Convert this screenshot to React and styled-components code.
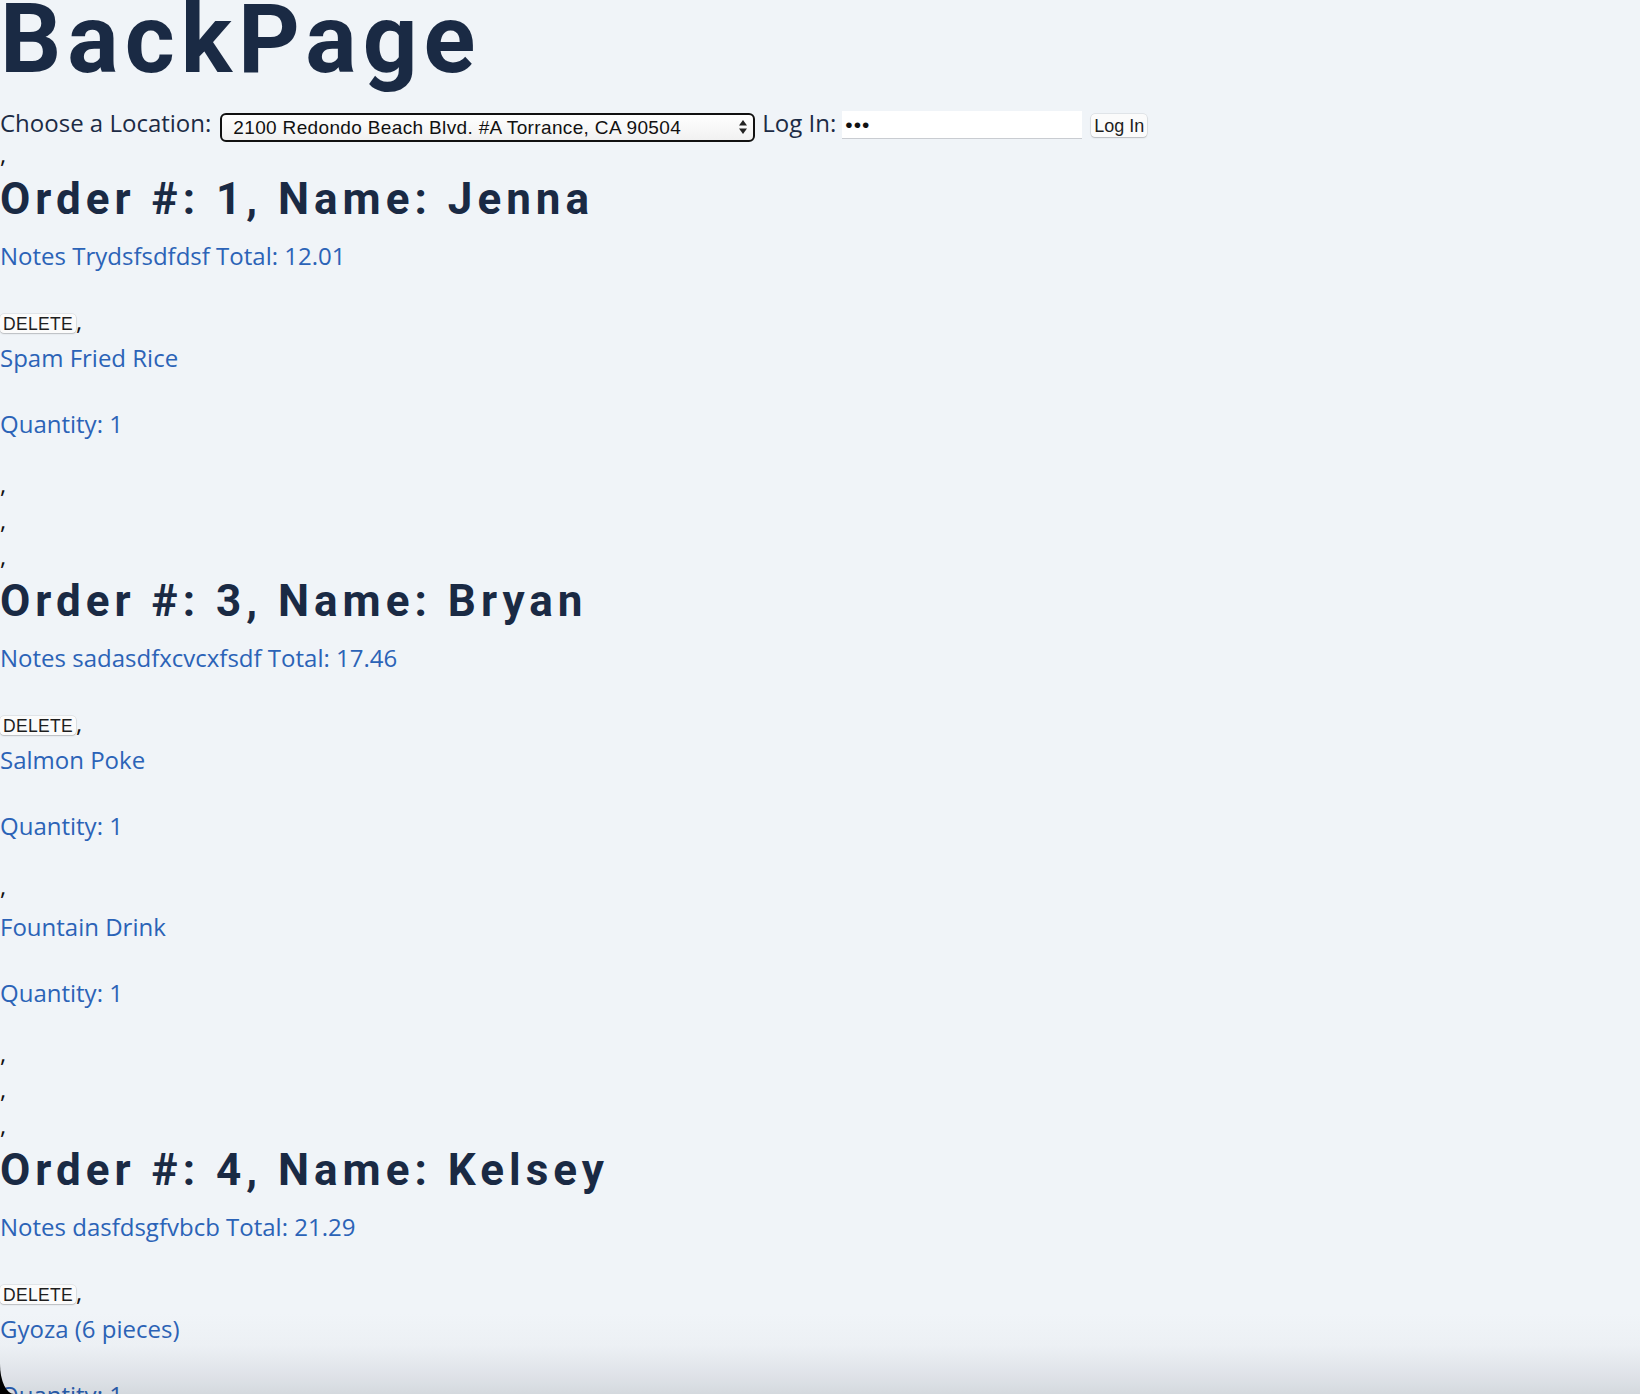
import React from "react";
import styled, { createGlobalStyle } from "styled-components";

const Global = createGlobalStyle`
  html, body { margin: 0; padding: 0; background: #f0f4f8; }
  body { font-family: "Open Sans", "Noto Sans", sans-serif; font-size: 24px; color: #1c2b45; overflow: hidden; }
`;

const Page = styled.div`
  min-height: 1394px;
`;

const Title = styled.h1`
  margin: 0;
  font-family: Roboto, "Liberation Sans", sans-serif;
  font-weight: 700;
  font-size: 96px;
  line-height: 78px;
  letter-spacing: 6px;
  color: #1a2a44;
`;

const Toolbar = styled.div`
  display: flex;
  align-items: flex-start;
  height: 28px;
  margin-top: 30px;
`;

const Label = styled.span`
  font-size: 24px;
  line-height: 32px;
  margin-top: -1px;
  color: #1c2b45;
  margin-left: ${(p) => p.$ml || 0}px;
  white-space: nowrap;
`;

const SelectWrap = styled.div`
  position: relative;
  margin-left: 9px;
  margin-top: 5px;
  height: 28px;
`;

const Select = styled.select`
  display: block;
  appearance: none;
  -webkit-appearance: none;
  width: 535px;
  height: 29px;
  box-sizing: border-box;
  border: 2px solid #111;
  border-radius: 6px;
  background: linear-gradient(#ffffff, #f1f1f1);
  font-family: "Liberation Sans", Arial, sans-serif;
  font-size: 19px;
  letter-spacing: 0.35px;
  color: #111;
  padding: 0 0 0 11px;
  margin: 0;
  outline: none;
`;

const Arrows = styled.svg`
  position: absolute;
  right: 7px;
  top: 5px;
  pointer-events: none;
`;

const Password = styled.input`
  display: block;
  width: 240px;
  height: 28px;
  box-sizing: border-box;
  margin: 3px 0 0 6px;
  border: none;
  border-bottom: 1px solid #c9ccd1;
  background: #ffffff;
  font-family: "Liberation Sans", Arial, sans-serif;
  font-size: 21px;
  padding: 0 3px;
  color: #111;
  outline: none;
  letter-spacing: 1px;
`;

const SmallButton = styled.button`
  font-family: "Liberation Sans", Arial, sans-serif;
  font-size: ${(p) => p.$size || 17.5}px;
  letter-spacing: 0.3px;
  color: #1e1e1e;
  background: #fbfbfb;
  border: none;
  border-radius: 4px;
  box-shadow: 0 0 0 0.5px rgba(0, 0, 0, 0.12), 0 1px 1.5px rgba(0, 0, 0, 0.18);
  padding: 1px 3px 0;
  line-height: 18px;
  margin: 0;
  cursor: pointer;
`;

const LoginButton = styled(SmallButton)`
  display: block;
  margin-left: 9px;
  margin-top: 6px;
  height: 23px;
  padding: 0 3px;
  letter-spacing: 0;
`;

const Sep = styled.div`
  font-size: 24px;
  line-height: 36px;
  height: 36px;
  color: #111;
  margin-top: ${(p) => p.$mt || 0}px;
`;

const Heading = styled.h2`
  margin: 2px 0 0;
  font-family: Roboto, "Liberation Sans", sans-serif;
  font-weight: 700;
  font-size: 44px;
  line-height: 50px;
  letter-spacing: 5px;
  color: #1a2a44;
`;

const Text = styled.p`
  margin: ${(p) => p.$mt || 0}px 0 0;
  font-size: 24px;
  line-height: 32px;
  color: #2b63b7;
`;

const DeleteLine = styled.div`
  margin-top: 33px;
  font-size: 24px;
  line-height: 32px;
  height: 32px;
  color: #111;
`;

const Shade = styled.div`
  position: fixed;
  left: 0;
  right: 0;
  bottom: 0;
  height: 80px;
  pointer-events: none;
  mix-blend-mode: multiply;
  background: linear-gradient(#ffffff, #fbfbfb 40%, #eeeef0 75%, #e2e3e5);
`;

const Corner = styled.div`
  position: fixed;
  left: 0;
  bottom: 0;
  width: 14px;
  height: 30px;
  overflow: hidden;
  pointer-events: none;
  &::before {
    content: "";
    position: absolute;
    left: 0;
    bottom: 0;
    width: 40px;
    height: 60px;
    border-bottom-left-radius: 14px 30px;
    box-shadow: 0 0 0 30px #000;
  }
`;

const orders = [
  {
    id: 1,
    name: "Jenna",
    notes: "Trydsfsdfdsf",
    total: "12.01",
    items: [{ name: "Spam Fried Rice", qty: 1 }],
  },
  {
    id: 3,
    name: "Bryan",
    notes: "sadasdfxcvcxfsdf",
    total: "17.46",
    items: [
      { name: "Salmon Poke", qty: 1 },
      { name: "Fountain Drink", qty: 1 },
    ],
  },
  {
    id: 4,
    name: "Kelsey",
    notes: "dasfdsgfvbcb",
    total: "21.29",
    items: [{ name: "Gyoza (6 pieces)", qty: 1 }],
  },
];

function Order({ order }) {
  return (
    <>
      <Sep>,</Sep>
      <Heading>
        Order #: {order.id}, Name: {order.name}
      </Heading>
      <Text $mt={16}>
        Notes {order.notes} Total: {order.total}
      </Text>
      <DeleteLine>
        <SmallButton>DELETE</SmallButton>,
      </DeleteLine>
      {order.items.map((it, i) => (
        <React.Fragment key={i}>
          <Text $mt={i === 0 ? 5 : 7}>{it.name}</Text>
          <Text $mt={34}>Quantity: {it.qty}</Text>
          <Sep $mt={26}>,</Sep>
        </React.Fragment>
      ))}
    </>
  );
}

export default function App() {
  return (
    <Page>
      <Global />
      <Title>BackPage</Title>
      <Toolbar>
        <Label>Choose a Location:</Label>
        <SelectWrap>
          <Select defaultValue="a">
            <option value="a">2100 Redondo Beach Blvd. #A Torrance, CA 90504</option>
          </Select>
          <Arrows width="10" height="18" viewBox="0 0 10 18">
            <path d="M5 2 L9 7.5 H1 Z" fill="#222" />
            <path d="M5 16 L9 10.5 H1 Z" fill="#222" />
          </Arrows>
        </SelectWrap>
        <Label $ml={7}>Log In:</Label>
        <Password type="password" defaultValue="abc" />
        <LoginButton $size={18}>Log In</LoginButton>
      </Toolbar>
      {orders.map((o, i) => (
        <React.Fragment key={o.id}>
          {i > 0 && <Sep>,</Sep>}
          <Order order={o} />
        </React.Fragment>
      ))}
      <Shade />
      <Corner />
    </Page>
  );
}
